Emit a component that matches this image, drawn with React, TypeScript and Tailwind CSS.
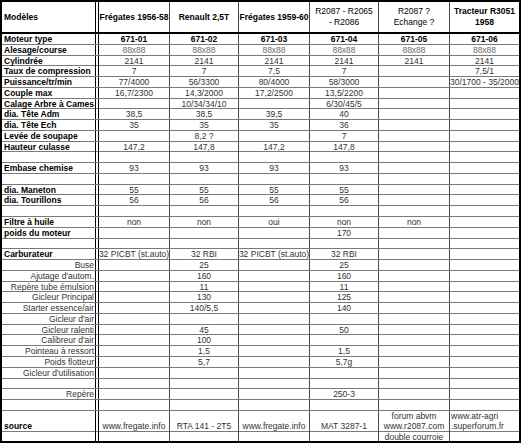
import React from "react";

type Row = {
    label: string;
    sub?: boolean;
    vals: string[];
    boldVals?: boolean;
    grey?: boolean;
};

const rows: Row[] = [
    { label: "Moteur type", vals: ["671-01", "671-02", "671-03", "671-04", "671-05", "671-06"], boldVals: true },
    { label: "Alesage/course", vals: ["88x88", "88x88", "88x88", "88x88", "88x88", "88x88"], grey: true },
    { label: "Cylindrée", vals: ["2141", "2141", "2141", "2141", "2141", "2141"] },
    { label: "Taux de compression", vals: ["7", "7", "7,5", "7", "", "7,5/1"] },
    { label: "Puissance/tr/min", vals: ["77/4000", "56/3300", "80/4000", "58/3000", "", "30/1700 - 35/2000"] },
    { label: "Couple max", vals: ["16,7/2300", "14,3/2000", "17,2/2500", "13,5/2200", "", ""] },
    { label: "Calage Arbre à Cames", vals: ["", "10/34/34/10", "", "6/30/45/5", "", ""] },
    { label: "dia. Tête Adm", vals: ["38,5", "38,5", "39,5", "40", "", ""] },
    { label: "dia. Tête Ech", vals: ["35", "35", "35", "36", "", ""] },
    { label: "Levée de soupape", vals: ["", "8,2 ?", "", "7", "", ""] },
    { label: "Hauteur culasse", vals: ["147,2", "147,8", "147,2", "147,8", "", ""] },
    { label: "", vals: [] },
    { label: "Embase chemise", vals: ["93", "93", "93", "93", "", ""] },
    { label: "", vals: [] },
    { label: "dia. Maneton", vals: ["55", "55", "55", "55", "", ""] },
    { label: "dia. Tourillons", vals: ["56", "56", "56", "56", "", ""] },
    { label: "", vals: [] },
    { label: "Filtre à huile", vals: ["non", "non", "oui", "non", "non", ""] },
    { label: "poids du moteur", vals: ["", "", "", "170", "", ""] },
    { label: "", vals: [] },
    { label: "Carburateur", vals: ["32 PICBT (st.auto)", "32 RBI", "32 PICBT (st.auto)", "32 RBI", "", ""] },
    { label: "Buse", sub: true, vals: ["", "25", "", "25", "", ""] },
    { label: "Ajutage d'autom.", sub: true, vals: ["", "160", "", "160", "", ""] },
    { label: "Repère tube émulsion", sub: true, vals: ["", "11", "", "11", "", ""] },
    { label: "Gicleur Principal", sub: true, vals: ["", "130", "", "125", "", ""] },
    { label: "Starter essence/air", sub: true, vals: ["", "140/5,5", "", "140", "", ""] },
    { label: "Gicleur d'air", sub: true, vals: [] },
    { label: "Gicleur ralenti", sub: true, vals: ["", "45", "", "50", "", ""] },
    { label: "Calibreur d'air", sub: true, vals: ["", "100", "", "", "", ""] },
    { label: "Pointeau à ressort", sub: true, vals: ["", "1,5", "", "1,5", "", ""] },
    { label: "Poids flotteur", sub: true, vals: ["", "5,7", "", "5,7g", "", ""] },
    { label: "Gicleur d'utilisation", sub: true, vals: [] },
    { label: "", vals: [] },
    { label: "Repère", sub: true, vals: ["", "", "", "250-3", "", ""] },
    { label: "", vals: [] },
];

// same column template for every row
const rowGrid = "grid grid-cols-[97px_71px_69px_71px_69px_71px_minmax(0,1fr)]";

const DataCells = ({ vals, bold, grey }: { vals: string[]; bold?: boolean; grey?: boolean }) => (
    <>
        {[0, 1, 2, 3, 4, 5].map(i => (
            <div
                key={i}
                className={
                    (i < 5 ? "border-r border-[#4a4a4a] " : "") +
                    "flex items-center justify-center text-center whitespace-nowrap " +
                    (bold ? "font-bold text-black" : grey ? "text-[#6b6b6b]" : "text-[#333]")
                }
            >
                {vals[i] ? <span>{vals[i]}</span> : null}
            </div>
        ))}
    </>
);

export default function App() {
    return (
        <div className="w-[521px] h-[443px] flex flex-col bg-white border-2 border-black font-['Liberation_Sans',Arial,sans-serif] text-[8.5px] leading-[10px] text-black overflow-hidden">
            {/* Header */}
            <div className={rowGrid + " h-[32px] shrink-0 border-b-2 border-black"}>
                <div className="border-r-4 border-double border-black flex items-center pl-[2px] font-bold">
                    Modèles
                </div>
                <div className="border-r border-[#4a4a4a] flex items-center justify-center font-bold whitespace-nowrap">Frégates 1956-58</div>
                <div className="border-r border-[#4a4a4a] flex items-center justify-center font-bold">Renault 2,5T</div>
                <div className="border-r border-[#4a4a4a] flex items-center justify-center font-bold whitespace-nowrap">Frégates 1959-60</div>
                <div className="border-r border-[#4a4a4a] flex items-center justify-center text-center leading-[11px]">
                    R2087 - R2065<br />- R2086
                </div>
                <div className="border-r border-[#4a4a4a] flex items-center justify-center text-center leading-[11px]">
                    R2087 ?<br />Echange ?
                </div>
                <div className="flex items-center justify-center text-center font-bold leading-[11px]">
                    Tracteur R3051<br />1958
                </div>
            </div>

            {/* Body rows */}
            {rows.map((r, idx) => (
                <div key={idx} className={rowGrid + " h-[10.77px] shrink-0 border-b border-[#7a7a7a]"}>
                    <div
                        className={
                            "border-r-4 border-double border-black flex items-center whitespace-nowrap " +
                            (r.sub ? "justify-end pr-[1px] text-[#333]" : "pl-[2px] font-bold")
                        }
                    >
                        {r.label}
                    </div>
                    <DataCells vals={r.vals} bold={r.boldVals} grey={r.grey} />
                </div>
            ))}

            {/* Source row */}
            <div className={rowGrid + " h-[21px] shrink-0 border-b border-[#7a7a7a] text-[#333]"}>
                <div className="border-r-4 border-double border-black flex items-end pb-[1px] pl-[2px] font-bold text-black">
                    source
                </div>
                <div className="border-r border-[#4a4a4a] flex items-end justify-center pb-[1px] whitespace-nowrap">www.fregate.info</div>
                <div className="border-r border-[#4a4a4a] flex items-end justify-center pb-[1px] whitespace-nowrap">RTA 141 - 2T5</div>
                <div className="border-r border-[#4a4a4a] flex items-end justify-center pb-[1px] whitespace-nowrap">www.fregate.info</div>
                <div className="border-r border-[#4a4a4a] flex items-end justify-center pb-[1px]">MAT 3287-1</div>
                <div className="border-r border-[#4a4a4a] flex items-end justify-center text-center pb-[1px] whitespace-nowrap">
                    forum abvm<br />www.r2087.com
                </div>
                <div className="flex items-end pl-[1px] pb-[1px] whitespace-nowrap">
                    www.atr-agri<br />.superforum.fr
                </div>
            </div>

            {/* Last row */}
            <div className={rowGrid + " flex-1"}>
                <div className="border-r-4 border-double border-black" />
                <DataCells vals={["", "", "", "", "double courroie", ""]} />
            </div>
        </div>
    );
}
